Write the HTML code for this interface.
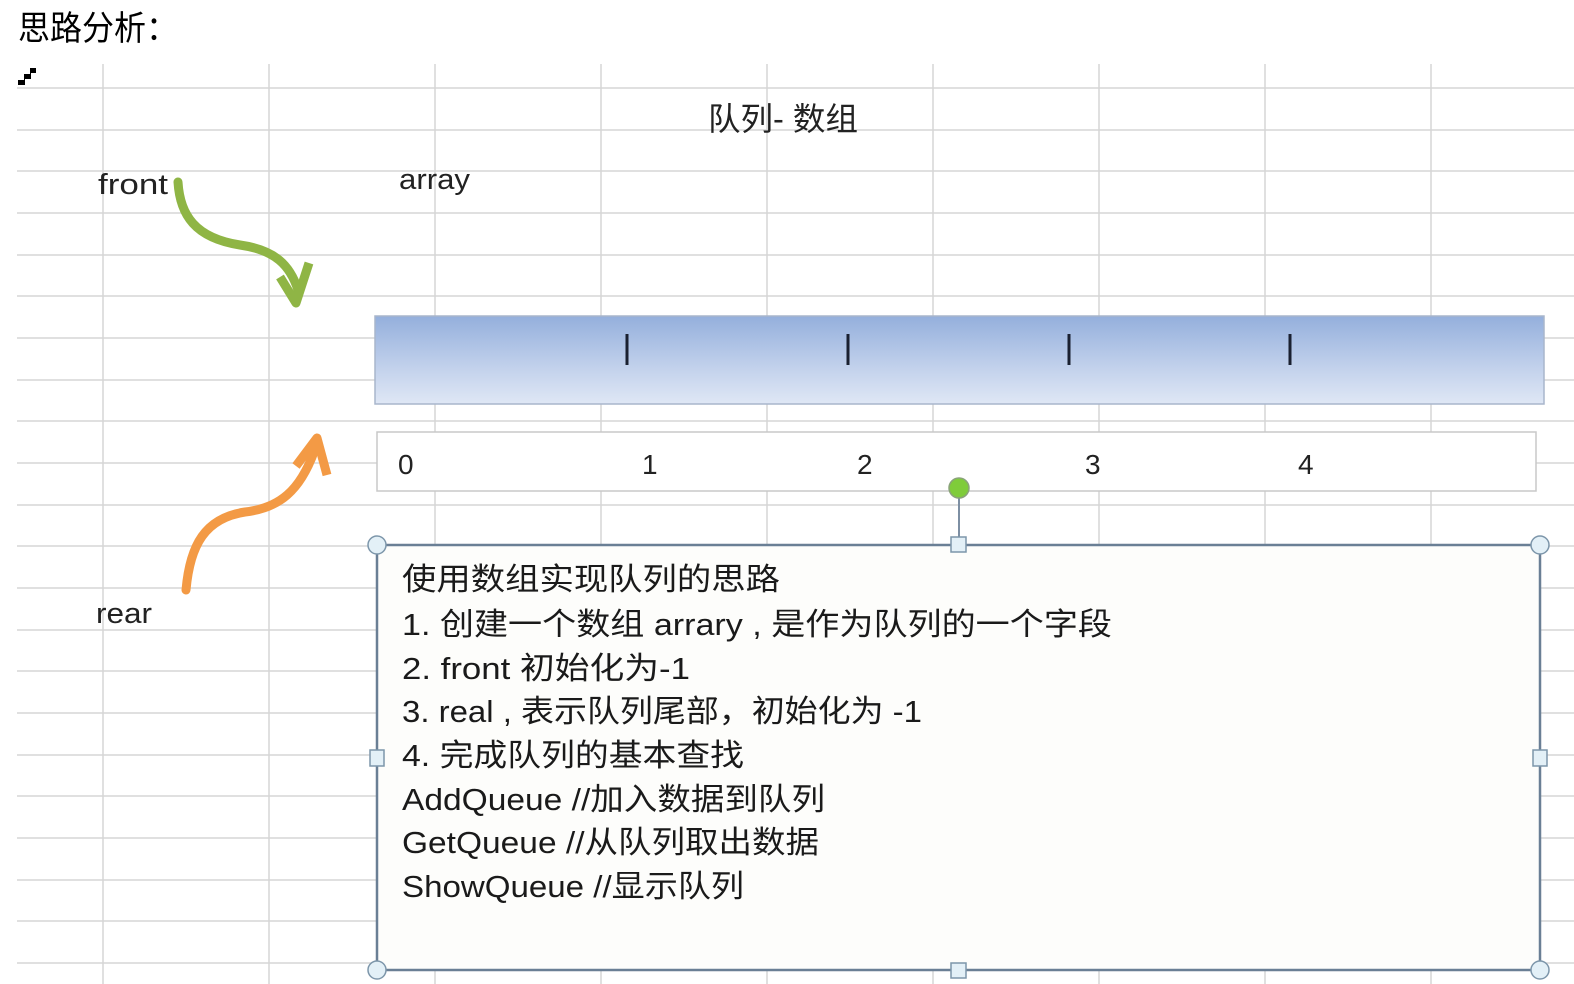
<!DOCTYPE html>
<html><head><meta charset="utf-8"><style>
html,body{margin:0;padding:0;background:#fff;width:1574px;height:984px;overflow:hidden}
svg{display:block}
text{font-family:"Liberation Sans","Noto Sans CJK SC",sans-serif}
</style></head><body>
<svg width="1574" height="984" viewBox="0 0 1574 984" xmlns="http://www.w3.org/2000/svg">
<defs>
<linearGradient id="bar" x1="0" y1="0" x2="0" y2="1">
<stop offset="0" stop-color="#94afdc"/><stop offset="0.6" stop-color="#c3d2ec"/><stop offset="1" stop-color="#dfe7f5"/>
</linearGradient>
</defs>
<text x="18" y="40" font-size="34" fill="#000" font-family="Noto Sans CJK SC" textLength="160" lengthAdjust="spacingAndGlyphs">思路分析：</text>
<path d="M18 80h6v-6h6v-6h6v5h-5v6h-6v6h-7z" fill="#000"/>
<g stroke="#d6d6d6" stroke-width="1.5">
<line x1="103" y1="64" x2="103" y2="984"/><line x1="269" y1="64" x2="269" y2="984"/>
<line x1="435" y1="64" x2="435" y2="984"/><line x1="601" y1="64" x2="601" y2="984"/>
<line x1="767" y1="64" x2="767" y2="984"/><line x1="933" y1="64" x2="933" y2="984"/>
<line x1="1099" y1="64" x2="1099" y2="984"/><line x1="1265" y1="64" x2="1265" y2="984"/>
<line x1="1431" y1="64" x2="1431" y2="984"/>
<line x1="17" y1="88" x2="1574" y2="88"/><line x1="17" y1="130" x2="1574" y2="130"/>
<line x1="17" y1="171" x2="1574" y2="171"/><line x1="17" y1="213" x2="1574" y2="213"/>
<line x1="17" y1="255" x2="1574" y2="255"/><line x1="17" y1="296" x2="1574" y2="296"/>
<line x1="17" y1="338" x2="1574" y2="338"/><line x1="17" y1="380" x2="1574" y2="380"/>
<line x1="17" y1="421" x2="1574" y2="421"/><line x1="17" y1="463" x2="1574" y2="463"/>
<line x1="17" y1="505" x2="1574" y2="505"/><line x1="17" y1="546" x2="1574" y2="546"/>
<line x1="17" y1="588" x2="1574" y2="588"/><line x1="17" y1="630" x2="1574" y2="630"/>
<line x1="17" y1="671" x2="1574" y2="671"/><line x1="17" y1="713" x2="1574" y2="713"/>
<line x1="17" y1="755" x2="1574" y2="755"/><line x1="17" y1="796" x2="1574" y2="796"/>
<line x1="17" y1="838" x2="1574" y2="838"/><line x1="17" y1="880" x2="1574" y2="880"/>
<line x1="17" y1="921" x2="1574" y2="921"/><line x1="17" y1="963" x2="1574" y2="963"/>
</g>
<text x="708" y="130" font-size="32" fill="#222" textLength="150" lengthAdjust="spacingAndGlyphs">队列- 数组</text>
<text x="98" y="194" font-size="29" fill="#222" textLength="70" lengthAdjust="spacingAndGlyphs">front</text>
<text x="399" y="189" font-size="29" fill="#222" textLength="71" lengthAdjust="spacingAndGlyphs">array</text>
<text x="96" y="623" font-size="29" fill="#222" textLength="56" lengthAdjust="spacingAndGlyphs">rear</text>
<path d="M178 182 C180 215 195 238 240 245 C275 250 290 265 298 290" fill="none" stroke="#8fb545" stroke-width="9" stroke-linecap="round"/>
<path d="M280 277 L296 303 L309 263" fill="none" stroke="#8fb545" stroke-width="9" stroke-linejoin="round"/>
<path d="M186 590 C190 545 205 518 245 512 C280 508 300 490 314 452" fill="none" stroke="#f39a45" stroke-width="9" stroke-linecap="round"/>
<path d="M296 466 L317 438 L327 475" fill="none" stroke="#f39a45" stroke-width="9" stroke-linejoin="round"/>
<rect x="375" y="316" width="1169" height="88" fill="url(#bar)" stroke="#a8b6cc" stroke-width="1.5"/>
<g stroke="#1a2030" stroke-width="3">
<line x1="627" y1="334" x2="627" y2="365"/><line x1="848" y1="334" x2="848" y2="365"/>
<line x1="1069" y1="334" x2="1069" y2="365"/><line x1="1290" y1="334" x2="1290" y2="365"/>
</g>
<rect x="377" y="432" width="1159" height="59" fill="#fff" stroke="#c8c8c8" stroke-width="1.5"/>
<g font-size="28" fill="#222">
<text x="398" y="474">0</text><text x="642" y="474">1</text><text x="857" y="474">2</text>
<text x="1085" y="474">3</text><text x="1298" y="474">4</text>
</g>
<rect x="377" y="545" width="1163" height="425" fill="#fdfdfb" stroke="#6a7f95" stroke-width="2.5"/>
<line x1="959" y1="490" x2="959" y2="545" stroke="#7d8fa3" stroke-width="2"/>
<circle cx="959" cy="488" r="10" fill="#7fcc3a" stroke="#8aa37a" stroke-width="1.5"/>
<g fill="#e3f0f7" stroke="#7d96aa" stroke-width="1.5">
<circle cx="377" cy="545" r="9"/><circle cx="1540" cy="545" r="9"/>
<circle cx="377" cy="970" r="9"/><circle cx="1540" cy="970" r="9"/>
<rect x="951" y="537" width="15" height="15"/><rect x="370" y="750" width="14" height="16"/>
<rect x="1533" y="750" width="14" height="16"/><rect x="951" y="963" width="15" height="15"/>
</g>
<g font-size="31" fill="#1a1a1a">
<text x="402" y="590" textLength="378" lengthAdjust="spacingAndGlyphs">使用数组实现队列的思路</text>
<text x="402" y="635" textLength="710" lengthAdjust="spacingAndGlyphs">1.  创建一个数组 arrary , 是作为队列的一个字段</text>
<text x="402" y="679" textLength="288" lengthAdjust="spacingAndGlyphs">2.  front 初始化为-1</text>
<text x="402" y="722" textLength="520" lengthAdjust="spacingAndGlyphs">3. real , 表示队列尾部，初始化为 -1</text>
<text x="402" y="766" textLength="342" lengthAdjust="spacingAndGlyphs">4. 完成队列的基本查找</text>
<text x="402" y="810" textLength="423" lengthAdjust="spacingAndGlyphs">AddQueue //加入数据到队列</text>
<text x="402" y="853" textLength="417" lengthAdjust="spacingAndGlyphs">GetQueue //从队列取出数据</text>
<text x="402" y="897" textLength="342" lengthAdjust="spacingAndGlyphs">ShowQueue //显示队列</text>
</g>
</svg>
</body></html>
